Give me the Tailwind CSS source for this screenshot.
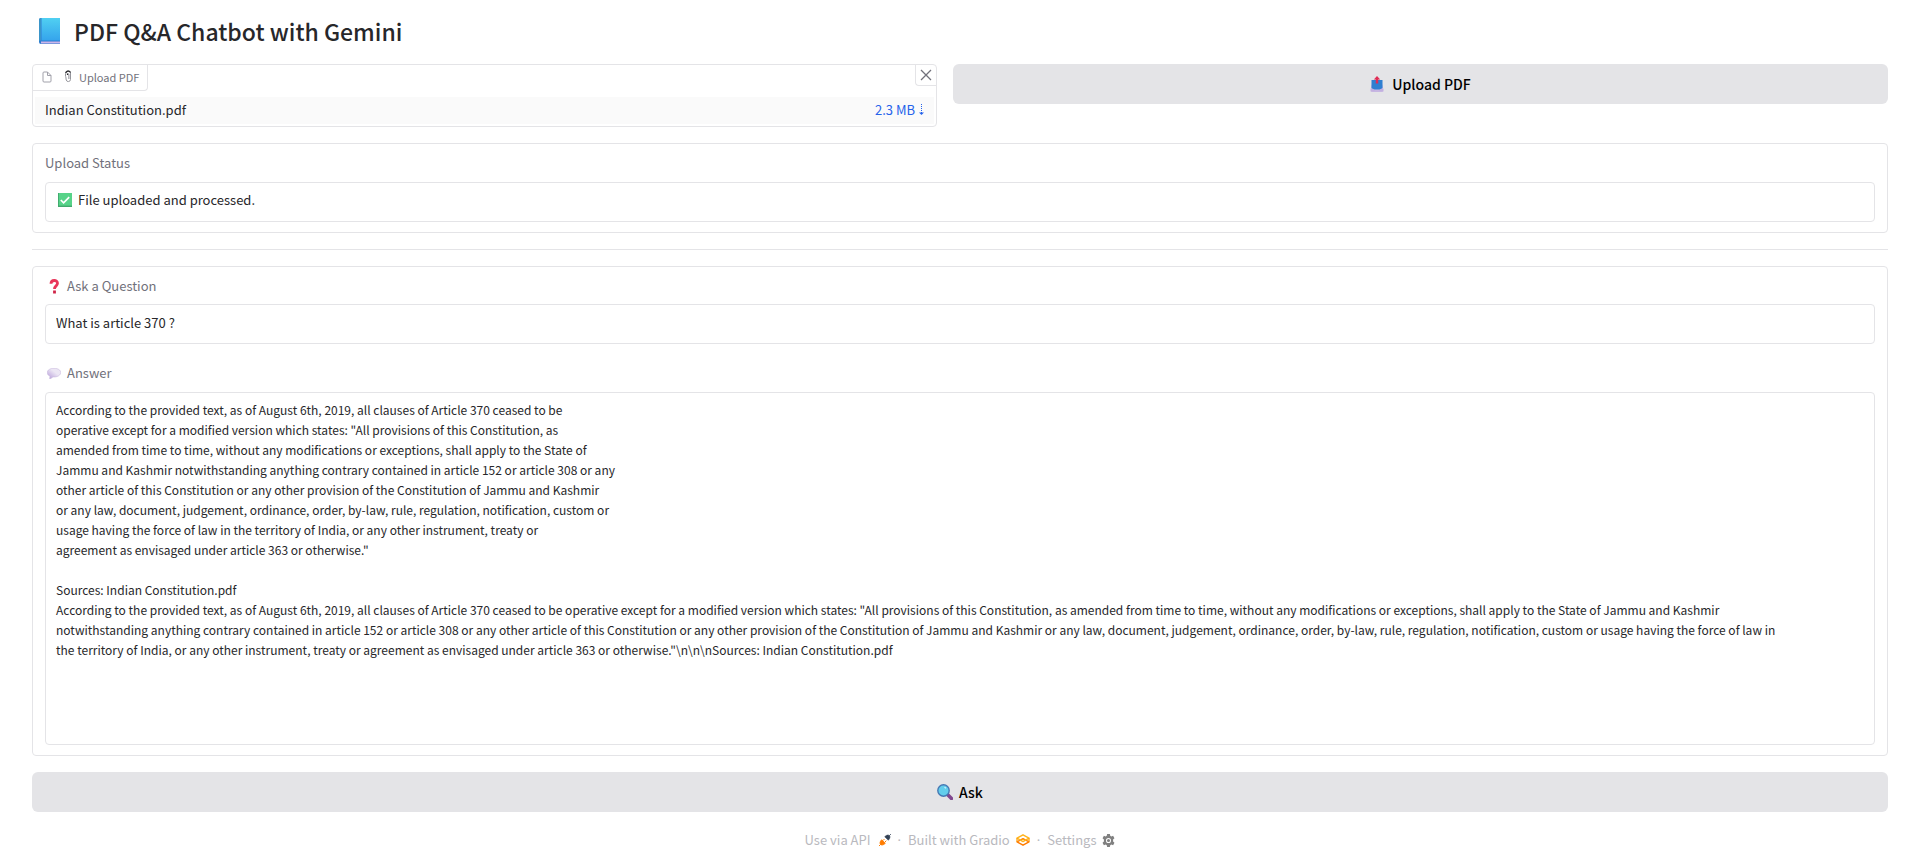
<!DOCTYPE html>
<html lang="en">
<head>
<meta charset="utf-8">
<meta name="viewport" content="width=device-width, initial-scale=1">
<title>PDF Q&amp;A Chatbot with Gemini</title>
<script src="https://cdn.jsdelivr.net/npm/@tailwindcss/browser@4"></script>
</head>
<body class="bg-white pl-8 pr-[30px] font-['Noto_Sans_CJK_SC','Noto_Sans',sans-serif] text-[13px] leading-5 text-zinc-800">
<main class="flex flex-col gap-4">
  <h1 class="flex h-12 items-center gap-3 pt-3.5 pl-1.5 text-[23px] leading-9 font-medium">
    <svg class="h-7 w-6 shrink-0" viewBox="0 0 24 28" aria-hidden="true">
      <defs><linearGradient id="cover" x1="0" y1="0" x2="0" y2="1"><stop stop-color="#50d0f2"/><stop offset="1" stop-color="#35a4ec"/></linearGradient></defs>
      <path d="M3 1h19v26H3a2 2 0 0 1-2-2V3a2 2 0 0 1 2-2z" fill="#2f7bd0"/>
      <path d="M3 24.500h19v2H3z" fill="#cbb5ea"/>
      <path d="M3.500 1H22v22.500H3.500z" fill="url(#cover)"/>
      <path d="M1 3a2 2 0 0 1 2-2v22.500a2 2 0 0 0-2 1z" fill="#3a95c9"/>
    </svg>
    PDF Q&amp;A Chatbot with Gemini
  </h1>

  <section class="grid grid-cols-[905fr_935fr] items-start gap-4">
    <div class="flex flex-col gap-1.5 rounded border border-zinc-200 pb-0.5">
      <div class="flex h-[26px] items-start justify-between">
        <div class="flex h-[26px] items-center rounded-br border-r border-b border-zinc-200 px-2 pb-0.5 text-[11px] text-zinc-500">
          <svg class="mr-2.5 size-3" viewBox="0 0 24 24" fill="none" stroke="#a1a1aa" stroke-width="2" stroke-linejoin="round" aria-hidden="true"><path d="M13 2H6a2 2 0 0 0-2 2v16a2 2 0 0 0 2 2h12a2 2 0 0 0 2-2V9z"/><path d="M13 2v7h7"/></svg>
          <svg class="mr-1.5 h-[13px] w-2.5" viewBox="0 0 10 13" fill="none" aria-hidden="true"><path d="M2.500 6.500V3.500a2.500 2.500 0 0 1 5-.5v6.500a2.200 2.200 0 0 1-4.300.5L2.800 6.500" stroke="#96969c"/><path d="M4.500 4.500a.7.7 0 0 1 1.400 0V9" stroke="#71717a" stroke-width=".8"/><path d="M2.700 3C3.400.800 6.600.500 7.500 2.500M4.500 3.500v1.500" stroke="#27272a" stroke-width="1.200"/></svg>
          Upload PDF
        </div>
        <button type="button" aria-label="Clear" class="flex size-[21px] cursor-pointer items-center justify-center rounded-bl border-b border-l border-zinc-200 text-zinc-500">
          <svg class="size-3" viewBox="0 0 12 12" stroke="currentColor" stroke-width="1.300" aria-hidden="true"><path d="M1 1l10 10M11 1L1 11"/></svg>
        </button>
      </div>
      <div class="mx-0.5 flex h-[27px] items-center justify-between bg-zinc-50 px-2.5 pb-0.5">
        <span>Indian Constitution.pdf</span>
        <a href="#" class="flex items-center gap-1 text-[#2563eb]">2.3 MB
          <svg class="h-3 w-[5px]" viewBox="0 0 5 12" aria-hidden="true"><path d="M2.500 0v9" stroke="currentColor" stroke-dasharray="1 1"/><path d="M0 8.500h5L2.500 11z" fill="currentColor"/></svg>
        </a>
      </div>
    </div>
    <button type="button" class="flex h-10 cursor-pointer items-center justify-center gap-2 rounded-md bg-zinc-200 text-[14px] font-medium text-black">
      <svg class="h-4 w-[14px]" viewBox="0 0 14 16" aria-hidden="true"><path d="M1 8l2 4h8l2-4v7a1 1 0 0 1-1 1H2a1 1 0 0 1-1-1z" fill="#cdbde5"/><path d="M1.500 4h11v8l-2 1.500h-7L1.500 12z" fill="#2f7fd1"/><path d="M7 0L3.800 3.500h2V7.500h2.400v-4h2z" fill="#e02c55"/><path d="M.500 12.500l3 .5L5 14.500h4l1.500-1.500 3-.5v3H.500z" fill="#c2b0e0"/></svg>
      Upload PDF
    </button>
  </section>

  <section class="rounded border border-zinc-200 px-3 pt-2 pb-2.5">
    <label for="status" class="mb-2 flex h-[22px] items-center text-zinc-500">Upload Status</label>
    <div class="flex h-10 items-center gap-1.5 rounded border border-zinc-200 px-3 pb-1">
      <svg class="size-[14px] shrink-0" viewBox="0 0 15 15" aria-hidden="true"><path d="M0 0h15v15H0z" fill="#41a96d"/><path d="M1 0h14v13.500H1z" fill="#57d389"/><path d="M3 7.500l3 3L12 4.500" fill="none" stroke="#fff" stroke-width="1.800"/></svg>
      <input id="status" type="text" readonly value="File uploaded and processed." class="min-w-0 flex-1 outline-none">
    </div>
  </section>

  <hr class="border-t border-zinc-200">

  <section class="rounded border border-zinc-200 px-3 pt-2 pb-2.5">
    <label for="question" class="mb-[7px] flex h-[22px] items-center gap-1.5 pl-0.5 text-zinc-500">
      <svg class="h-[15px] w-[14px]" viewBox="0 0 14 15" fill="none" aria-hidden="true"><path d="M4 4.800C4 .500 10.500.500 10.500 4.300c0 2.600-3 2.600-3 5.700" stroke="#e8365a" stroke-width="2.800"/><path d="M7.500 11.500v3" stroke="#d02347" stroke-width="2.800"/></svg>
      Ask a Question
    </label>
    <input id="question" type="text" value="What is article 370 ?" class="block h-10 w-full rounded border border-zinc-200 px-2.5 pb-1 outline-none">
    <label for="answer" class="mt-[18px] mb-2 flex h-[22px] items-center gap-1.5 pl-0.5 text-zinc-500">
      <svg class="h-[11px] w-[14px]" viewBox="0 0 14 11" aria-hidden="true"><defs><linearGradient id="bubble" x1="1" y1="0" x2="0" y2="1"><stop offset=".4" stop-color="#ece6f4"/><stop offset="1" stop-color="#b49ad8"/></linearGradient></defs><path d="M7 .300c4 0 6.700 1.800 6.700 4.200S11 9 7 9l-1-.1L3.500 10.700H2.600l.4-2.400C1.200 7.500.300 6.200.300 4.500.300 2.100 3 .300 7 .300z" fill="url(#bubble)" stroke="#c9bbdf" stroke-width=".6"/></svg>
      Answer
    </label>
    <textarea id="answer" rows="17" readonly class="block w-full resize-none overflow-hidden rounded border border-zinc-200 px-2.5 pt-[7px] pb-1 text-[12px] leading-5 outline-none">According to the provided text, as of August 6th, 2019, all clauses of Article 370 ceased to be
operative except for a modified version which states: "All provisions of this Constitution, as
amended from time to time, without any modifications or exceptions, shall apply to the State of
Jammu and Kashmir notwithstanding anything contrary contained in article 152 or article 308 or any
other article of this Constitution or any other provision of the Constitution of Jammu and Kashmir
or any law, document, judgement, ordinance, order, by-law, rule, regulation, notification, custom or
usage having the force of law in the territory of India, or any other instrument, treaty or
agreement as envisaged under article 363 or otherwise."

Sources: Indian Constitution.pdf
According to the provided text, as of August 6th, 2019, all clauses of Article 370 ceased to be operative except for a modified version which states: "All provisions of this Constitution, as amended from time to time, without any modifications or exceptions, shall apply to the State of Jammu and Kashmir
notwithstanding anything contrary contained in article 152 or article 308 or any other article of this Constitution or any other provision of the Constitution of Jammu and Kashmir or any law, document, judgement, ordinance, order, by-law, rule, regulation, notification, custom or usage having the force of law in
the territory of India, or any other instrument, treaty or agreement as envisaged under article 363 or otherwise."\n\n\nSources: Indian Constitution.pdf</textarea>
  </section>

  <button type="button" class="flex h-10 cursor-pointer items-center justify-center gap-1.5 rounded-md bg-zinc-200 text-[14px] font-medium text-black">
    <svg class="size-4" viewBox="0 0 16 16" aria-hidden="true"><path d="M10 10l4.500 4.500" stroke="#80478f" stroke-width="3.500" stroke-linecap="round"/><circle cx="6.500" cy="6.500" r="5.700" fill="#62cdec" stroke="#4678b4" stroke-width="1.400"/><path d="M7.500 3.200l1.500 1" stroke="#d5f5fb" stroke-width="1.200"/></svg>
    Ask
  </button>
</main>

<footer class="mt-[18px] flex h-5 items-center justify-center gap-[7px] text-[#b9b9be]">
  <a href="#" class="flex items-center gap-2">Use via API
    <svg class="size-3" viewBox="0 0 12 12" aria-hidden="true"><path d="M12 0l-1.500 1.500C9 .500 7.500 1 5.700 2.700L9.300 6.300C11 4.500 11.500 3 10.500 1.500z" fill="#334155" stroke="#334155" stroke-width=".5"/><path d="M0 12l1.500-1.500C.500 9 1 7.500 2.700 5.700L6.300 9.300C4.500 11 3 11.500 1.500 10.500z" fill="#ff7c00" stroke="#ff7c00" stroke-width=".8"/><path d="M4 6.500l1.500-1.500M5.800 8.200l1.500-1.500" stroke="#ff7c00"/></svg>
  </a>
  <span class="font-['Noto_Sans']">·</span>
  <a href="#" class="flex items-center gap-1.5">Built with Gradio
    <svg class="h-3 w-[14px]" viewBox="0 0 14 12" fill="none" stroke-linejoin="round" aria-hidden="true"><path d="M1 7.800l6 3.400 6-3.400L7 4.700z" stroke="#ff7c00" stroke-width="1.400"/><path d="M7 .800l6 3.400-6 3.400-6-3.400z" stroke="#ffb41f" stroke-width="1.500"/><path d="M1 4.200v3.600M13 4.200v3.600" stroke="#ff9d00" stroke-width="1.200"/><path d="M5 6l2-1 2 1" stroke="#ff9d00"/></svg>
  </a>
  <span class="font-['Noto_Sans']">·</span>
  <button type="button" class="flex cursor-pointer items-center gap-1.5">Settings
    <svg class="size-[13px]" viewBox="0 0 24 24" fill="#808080" aria-hidden="true"><path fill-rule="evenodd" d="M9.500 0h5l.7 3.300 2 1.100L20.500 3.300l2.500 4.400-2.500 2.300v4l2.500 2.300-2.500 4.400-3.300-1.100-2 1.100-.7 3.300h-5l-.7-3.300-2-1.100-3.300 1.100L1 16.300 3.500 14v-4L1 7.700l2.500-4.400 3.300 1.100 2-1.100zM12 7.300a4.700 4.700 0 1 0 0 9.400 4.700 4.700 0 0 0 0-9.400z"/><circle cx="12" cy="12" r="2.800"/></svg>
  </button>
</footer>
</body>
</html>
